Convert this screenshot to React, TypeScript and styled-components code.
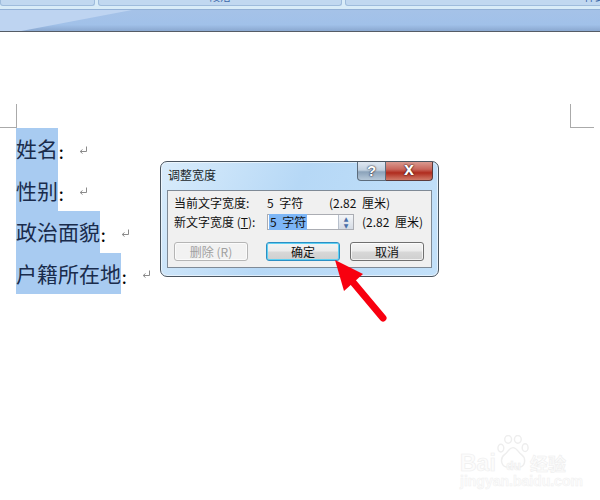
import styled, { createGlobalStyle } from 'styled-components';

const GlobalStyle = createGlobalStyle`
	html, body {
		margin: 0;
		width: 600px;
		height: 500px;
		overflow: hidden;
		background: #fff;
	}
`;

const fields = ['姓名', '性别', '政治面貌', '户籍所在地'];

function ReturnMark() {
	return (
		<ReturnSvg width="9" height="9" viewBox="0 0 9 9">
			<path d="M7.5 0.5V5.5H1.5M3.5 3.5L1.2 5.5L3.5 7.5" fill="none" stroke="#8a8a8a" strokeWidth="1" />
		</ReturnSvg>
	);
}

function Arrow() {
	return (
		<ArrowSvg width="60" height="70" viewBox="0 0 60 70">
			<path d="M5 5L14 36L33 19Z" fill="#f8000f" />
			<path d="M22 26L53 63" stroke="#f8000f" strokeWidth="7" strokeLinecap="round" />
		</ArrowSvg>
	);
}

function Paw() {
	return (
		<PawSvg width="34" height="34" viewBox="0 0 70 70" fill="#fff" stroke="#eeeeee" strokeWidth="3">
			<ellipse cx="10" cy="27" rx="6" ry="8" />
			<ellipse cx="25" cy="9" rx="7" ry="8" />
			<ellipse cx="45" cy="9" rx="7" ry="8" />
			<ellipse cx="60" cy="26" rx="6" ry="8" />
			<path d="M35 26C27 26 25 35 18 40C7 48 10 68 27 66C33 65 38 65 44 66C61 68 63 48 52 40C45 35 43 26 35 26Z" />
		</PawSvg>
	);
}

export default function App() {
	return (
		<Page>
			<GlobalStyle />
			<Ribbon>
				<TabStrip>
					<RibbonGroup $width={95} />
					<RibbonGroup $width={244}>
						<GroupLabel>段落</GroupLabel>
					</RibbonGroup>
					<RibbonGroup $width={500}>
						<GroupLabel>样式</GroupLabel>
					</RibbonGroup>
				</TabStrip>
				<RulerBand />
			</Ribbon>

			<Sheet>
				<MarginMarks>
					<LeftMark />
					<RightMark />
				</MarginMarks>
				<FieldList>
					{fields.map((field) => (
						<FieldRow key={field}>
							<Selected>{field}</Selected>
							<Colon>：</Colon>
							<ReturnMark />
						</FieldRow>
					))}
				</FieldList>
			</Sheet>

			<Dialog>
				<TitleBar>
					<DialogTitle>调整宽度</DialogTitle>
					<HelpButton>?</HelpButton>
					<CloseButton>x</CloseButton>
				</TitleBar>
				<Panel>
					<InfoRow>
						<FieldLabel>当前文字宽度:</FieldLabel>
						<CurrentValue>5 字符</CurrentValue>
						<span>(2.82 厘米)</span>
					</InfoRow>
					<InfoRow>
						<FieldLabel>
							新文字宽度 (<u>T</u>):
						</FieldLabel>
						<WidthInput>
							<InputText>5 字符</InputText>
							<Spinner>
								<SpinStep>▲</SpinStep>
								<SpinStep>▼</SpinStep>
							</Spinner>
						</WidthInput>
						<Unit>(2.82 厘米)</Unit>
					</InfoRow>
					<ButtonRow>
						<DialogButton disabled>删除 (R)</DialogButton>
						<DialogButton $primary>确定</DialogButton>
						<DialogButton>取消</DialogButton>
					</ButtonRow>
				</Panel>
			</Dialog>

			<Arrow />

			<Watermark>
				<Paw />
				<LogoRow>
					<LogoWord>Bai</LogoWord>
					<LogoDu>du</LogoDu>
					<LogoCn>经验</LogoCn>
				</LogoRow>
				<LogoUrl>jingyan.baidu.com</LogoUrl>
			</Watermark>
		</Page>
	);
}

const Page = styled.div`
	position: relative;
	width: 600px;
	height: 500px;
	overflow: hidden;
	background: #fff;
	font-family: 'Noto Sans CJK SC', sans-serif;
`;

const Ribbon = styled.div`
	height: 32px;
	display: flex;
	flex-direction: column;
	background: #d5e6f6;
`;

const TabStrip = styled.div`
	height: 9px;
	flex: none;
	display: flex;
	gap: 3px;
	background: #d9ecf8;
`;

const RibbonGroup = styled.div<{ $width: number }>`
	flex: 0 0 ${({ $width }) => $width}px;
	height: 6px;
	overflow: hidden;
	display: flex;
	justify-content: center;
	background: #c1d8f0;
	border: 1px solid #9fbcdc;
	border-top: none;
	border-radius: 0 0 3px 3px;
	box-sizing: border-box;
`;

const GroupLabel = styled.span`
	margin-top: -10px;
	font-size: 11px;
	line-height: 12px;
	color: #3e6aaa;
`;

const RulerBand = styled.div`
	position: relative;
	flex: 1;
	overflow: hidden;
	background: linear-gradient(#a5c2e8 0, #a1c1e9 70%, #8dabd3 96%);
	border-top: 1px solid #93b1d6;
	border-bottom: 1px solid #555c66;

	&::before {
		content: '';
		position: absolute;
		left: 0;
		top: 0;
		width: 132px;
		height: 22px;
		background: #bed4f1;
		clip-path: polygon(0 0, 100% 0, 16px 100%, 0 100%);
	}
`;

const Sheet = styled.div`
	padding-top: 72px;
`;

const MarginMarks = styled.div`
	display: flex;
	justify-content: space-between;
	height: 24px;
	padding-right: 6px;
`;

const LeftMark = styled.div`
	width: 16px;
	height: 23px;
	border-right: 1px solid #aaa;
	border-bottom: 1px solid #aaa;
`;

const RightMark = styled.div`
	width: 23px;
	height: 23px;
	border-left: 1px solid #aaa;
	border-bottom: 1px solid #aaa;
`;

const FieldList = styled.div`
	padding-left: 16px;
`;

const FieldRow = styled.div`
	height: 41.5px;
	display: flex;
	align-items: center;
	font-size: 21px;
	line-height: 41.5px;
	color: #1a2c4c;
`;

const Selected = styled.span`
	height: 100%;
	background: #a8cbf1;
`;

const Colon = styled.span`
	width: 21px;
	height: 100%;
	font-size: 13px;
	font-weight: 700;
	line-height: 50px;
	color: #000;
`;

const ReturnSvg = styled.svg`
	margin-top: 3px;
`;

const Dialog = styled.div`
	position: absolute;
	left: 160px;
	top: 161px;
	width: 279px;
	height: 116px;
	box-sizing: border-box;
	display: flex;
	flex-direction: column;
	padding: 0 6px 8px;
	border: 1px solid #4a5560;
	border-radius: 7px;
	background: linear-gradient(115deg, #d9ecfb 0, #b6d8f6 45%, #c3e1fa 100%);
	box-shadow: inset 0 0 0 1px rgba(255, 255, 255, 0.55);
	font-size: 12px;
	line-height: 16px;
	word-spacing: 3px;
	color: #111;
`;

const TitleBar = styled.div`
	height: 28px;
	flex: none;
	display: flex;
	align-items: flex-start;
`;

const DialogTitle = styled.div`
	flex: 1;
	margin-top: 5px;
	padding-left: 1px;
	color: #1a1f28;
`;

const HelpButton = styled.div`
	width: 29px;
	height: 19px;
	box-sizing: border-box;
	border: 1px solid #5c6c7c;
	border-top: none;
	border-radius: 0 0 0 4px;
	background: linear-gradient(#dfe8f2 0, #c1d0df 45%, #8ba3ba 55%, #b6c8d9 100%);
	text-align: center;
	font: 700 15px/17px 'Liberation Sans', sans-serif;
	color: #fff;
	text-shadow: 0 0 1px #223, 0 0 2px #223;
`;

const CloseButton = styled.div`
	width: 47px;
	height: 19px;
	box-sizing: border-box;
	margin-right: -1px;
	border: 1px solid #5c3a3a;
	border-left: none;
	border-top: none;
	border-radius: 0 0 4px 0;
	background: linear-gradient(#d99a90 0, #c8675c 40%, #b02c1e 60%, #d07a68 100%);
	text-align: center;
	font: 700 18px/14px 'Liberation Sans', sans-serif;
	color: #fff;
	text-shadow: 0 0 1px #311, 0 0 2px #311;
`;

const Panel = styled.div`
	flex: 1;
	box-sizing: border-box;
	padding: 4px 6px 0;
	border: 1px solid #7f8a96;
	background: #f0f0f0;
	display: flex;
	flex-direction: column;
	gap: 3px;
`;

const InfoRow = styled.div`
	height: 16px;
	display: flex;
	align-items: center;
	white-space: nowrap;
`;

const FieldLabel = styled.div`
	width: 93px;
	flex: none;
	word-spacing: 0;
`;

const CurrentValue = styled.div`
	width: 62px;
	flex: none;
`;

const WidthInput = styled.div`
	width: 87px;
	height: 16px;
	flex: none;
	box-sizing: border-box;
	display: flex;
	align-items: center;
	justify-content: space-between;
	padding-left: 1px;
	border: 1px solid #abadb3;
	background: #fff;
`;

const InputText = styled.span`
	padding: 0 1px;
	background: #7db6f6;
`;

const Spinner = styled.div`
	width: 15px;
	height: 14px;
	display: flex;
	flex-direction: column;
	background: linear-gradient(#f4f6f9, #d5dbe4);
	border-left: 1px solid #b8c0cc;
	box-sizing: border-box;
`;

const SpinStep = styled.span`
	flex: 1;
	text-align: center;
	font: 6px/7px 'DejaVu Sans', sans-serif;
	color: #4a6fa8;
`;

const Unit = styled.span`
	margin-left: 8px;
`;

const ButtonRow = styled.div`
	display: flex;
	gap: 18px;
	margin-top: 9px;

	& > button:last-child {
		margin-left: -8px;
	}
`;

const DialogButton = styled.button<{ $primary?: boolean }>`
	width: 74px;
	height: 19px;
	padding: 0;
	font-family: inherit;
	font-size: 12px;
	line-height: 16px;
	color: ${({ disabled }) => (disabled ? '#a0a0a0' : '#111')};
	border-radius: 3px;
	border: 1px solid ${({ disabled, $primary }) =>
		disabled ? '#b5b5b5' : $primary ? '#2c8fc4' : '#707070'};
	background: ${({ disabled }) =>
		disabled
			? '#f2f2f2'
			: 'linear-gradient(#f4f4f4 0, #ebebeb 48%, #d8d8d8 52%, #cfcfcf 100%)'};
	box-shadow: ${({ $primary }) =>
		$primary ? 'inset 0 0 0 1px #5fd0f2' : 'inset 0 0 0 1px rgba(255,255,255,.7)'};
`;

const ArrowSvg = styled.svg`
	position: absolute;
	left: 330px;
	top: 255px;
`;

const Watermark = styled.div`
	position: absolute;
	left: 460px;
	top: 432px;
	width: 130px;
	height: 60px;
	white-space: nowrap;
	color: #fcfcfc;
`;

const PawSvg = styled.svg`
	position: absolute;
	left: 36px;
	top: 3px;
`;

const LogoRow = styled.div`
	position: absolute;
	left: 0;
	top: 14px;
	display: flex;
	align-items: center;
	font-family: 'Liberation Sans', sans-serif;
	font-weight: 700;
	-webkit-text-stroke: 0.6px #eeeeee;
`;

const LogoWord = styled.span`
	width: 37px;
	font-size: 23px;
	line-height: 26px;
`;

const LogoDu = styled.span`
	width: 33px;
	box-sizing: border-box;
	padding-top: 7px;
	font-size: 12px;
	line-height: 26px;
	text-align: center;
`;

const LogoCn = styled.span`
	font-family: 'Noto Sans CJK SC', sans-serif;
	font-size: 18px;
	line-height: 26px;
`;

const LogoUrl = styled.div`
	position: absolute;
	left: 0;
	top: 41px;
	font: 700 14px/16px 'Liberation Sans', sans-serif;
	-webkit-text-stroke: 0.5px #f0f0f0;
`;
